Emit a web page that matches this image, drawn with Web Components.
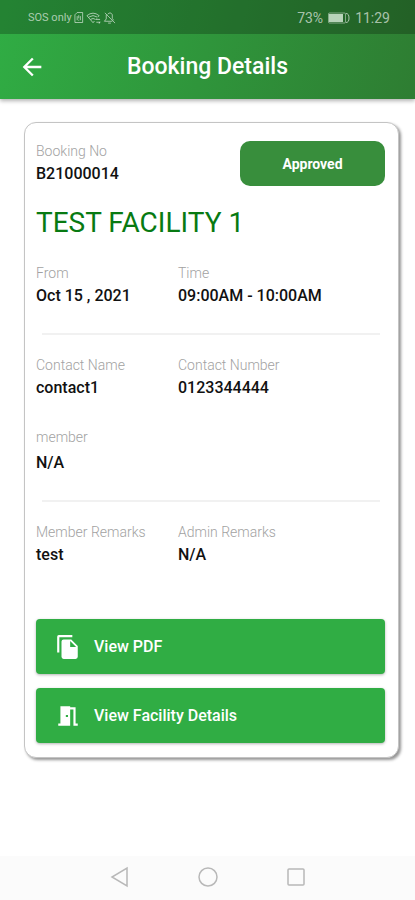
<!DOCTYPE html>
<html lang="en">
<head>
<meta charset="utf-8">
<meta name="viewport" content="width=device-width, initial-scale=1">
<title>Booking Details</title>
<style>
html, body { margin: 0; }
body { font-family: Roboto, "Liberation Sans", sans-serif; background: #fff; color: #111; }
</style>
</head>
<body>
<booking-screen></booking-screen>
<script>
const define = (name, html) => {
  const template = document.createElement('template');
  template.innerHTML = html;
  customElements.define(name, class extends HTMLElement {
    constructor() {
      super();
      this.attachShadow({ mode: 'open' }).append(template.content.cloneNode(true));
    }
  });
};

define('status-bar', `
<style>
:host { display: flex; justify-content: space-between; align-items: center; box-sizing: border-box; height: 34px; padding: 1px 25px 0 28px; background: rgba(0,0,0,.24); color: rgba(255,255,255,.62); }
div { display: flex; align-items: center; }
.left { font-size: 11px; gap: 2px; }
.right { font-size: 14px; gap: 5px; }
svg { display: block; fill: none; stroke: currentColor; }
</style>
<div class="left"><span>SOS only</span>
<svg width="10" height="13" viewBox="0 0 11 13"><path d="M3.5 1H9.5V12H1V3.5ZM3.5 5V9.500M7 5V9.500M5.200 4V7.500M5.200 9V10"/></svg>
<svg width="15" height="14" viewBox="0 0 16 14"><path d="M1 4.500Q7.500-.8 14 4.500L12.500 6M1 4.500L7.500 12L9 10.200M3 6Q7.500 2.800 12 6M5 8.400Q7.500 6.600 10 8.400M11 8.500H15M11 11.500H15M11.500 7.500L10.500 9M14 13L15 11"/></svg>
<svg width="13" height="14" viewBox="0 0 14 14"><path d="M2 1.500L13 12.500M3.500 3.500V8L1.500 10.500H10M5 3Q8-.2 10 3.500V7.500L11.500 9.500M5.500 12.500H8.500"/></svg>
</div>
<div class="right"><span>73%</span>
<svg width="22" height="12" viewBox="0 0 22 12"><rect x=".5" y="1" width="17" height="10" rx="1" stroke-opacity=".7"/><rect x="1" y="2" width="14" height="8" fill="#b7d3b9" stroke="none"/><path d="M18 1.500Q21 1.500 21 6T18 10.500"/></svg>
<span>11:29</span></div>`);

define('app-header', `
<style>
:host { display: block; color: #fff; background: linear-gradient(105deg, #30ad44, #2e7d32); box-shadow: 0 2px 4px rgba(0,0,0,.3); }
header { display: grid; grid-template-columns: 64px 1fr 64px; align-items: center; height: 65px; }
button { justify-self: center; display: block; padding: 0; margin: 0; border: 0; background: none; color: inherit; }
svg { display: block; fill: currentColor; }
h1 { margin: 0; padding-top: 1px; font-size: 23px; line-height: 28px; font-weight: 500; text-align: center; }
</style>
<status-bar></status-bar>
<header>
<button type="button" aria-label="Back"><svg width="28" height="28" viewBox="0 0 24 24"><path d="M20 11H7.830l5.590-5.590L12 4l-8 8 8 8 1.410-1.410L7.830 13H20z"/></svg></button>
<h1><slot></slot></h1>
</header>`);

define('status-badge', `
<style>
:host { display: flex; align-items: center; justify-content: center; box-sizing: border-box; width: 145px; height: 45px; border-radius: 10px; background: #388e3c; color: #fff; font-size: 14px; font-weight: 700; }
</style><slot></slot>`);

define('detail-field', `
<style>
:host { display: flex; flex-direction: column; gap: 1px; }
:host([spaced]) { gap: 4px; }
.label { font-size: 14px; line-height: 20px; font-weight: 300; color: #a2a2a2; }
.value { font-size: 16px; line-height: 24px; color: #111; font-weight: 500; }
</style>
<span class="label"><slot name="label"></slot></span>
<span class="value"><slot></slot></span>`);

define('field-row', `
<style>
:host { display: grid; grid-template-columns: 142px 1fr; }
</style><slot></slot>`);

define('section-rule', `
<style>
:host { display: block; height: 2px; margin: 25px 5px 20px 6px; background: #f1f1f1; }
</style>`);

define('action-button', `
<style>
:host { display: block; }
button { display: flex; align-items: center; gap: 13px; width: 100%; height: 55px; margin: 0; padding: 0 19px; border: 0; border-radius: 4px; background: #30ad44; color: #fff; font: 500 16px/24px Roboto, "Liberation Sans", sans-serif; text-align: left; box-shadow: 0 1px 3px rgba(0,0,0,.3); }
</style>
<button type="button"><slot name="icon"></slot><span><slot></slot></span></button>`);

define('booking-card', `
<style>
:host { display: block; margin: 23px 16px 0 24px; padding: 18px 13px 14px 11px; border: 1px solid #c4c4c4; border-radius: 12px; background: #fff; box-shadow: 2px 2px 3px rgba(0,0,0,.42); }
.top { display: flex; justify-content: space-between; align-items: flex-end; }
h2 { margin: 19px 0 22px; font-size: 28px; line-height: 36px; font-weight: 400; color: #087a12; }
.member { margin-top: 27px; }
.actions { display: grid; gap: 14px; margin-top: 52px; }
svg { display: block; width: 26px; height: 26px; fill: currentColor; }
</style>
<div class="top">
<detail-field><span slot="label">Booking No</span>B21000014</detail-field>
<status-badge>Approved</status-badge>
</div>
<h2>TEST FACILITY 1</h2>
<field-row>
<detail-field><span slot="label">From</span>Oct 15 , 2021</detail-field>
<detail-field><span slot="label">Time</span>09:00AM - 10:00AM</detail-field>
</field-row>
<section-rule></section-rule>
<field-row>
<detail-field><span slot="label">Contact Name</span>contact1</detail-field>
<detail-field><span slot="label">Contact Number</span>0123344444</detail-field>
</field-row>
<detail-field class="member" spaced><span slot="label">member</span>N/A</detail-field>
<section-rule></section-rule>
<field-row>
<detail-field><span slot="label">Member Remarks</span>test</detail-field>
<detail-field><span slot="label">Admin Remarks</span>N/A</detail-field>
</field-row>
<div class="actions">
<action-button><svg slot="icon" viewBox="0 0 24 24" aria-hidden="true"><path d="M16 1H3.500Q2 1 2 2.500V17H4V3H16ZM15 5H8Q6 5 6 7V21Q6 23 8 23H19Q21 23 21 21V11ZM14 12V6.500L19.500 12Z"/></svg>View PDF</action-button>
<action-button><svg slot="icon" viewBox="0 0 24 24" aria-hidden="true"><path d="M14 6V21H3V19H5V3H14V4H19V19H21V21H17V6ZM10 11V13H12V11Z"/></svg>View Facility Details</action-button>
</div>`);

define('system-nav', `
<style>
:host { display: block; background: #fbfbfb; }
nav { display: flex; justify-content: center; align-items: center; gap: 64px; height: 44px; box-sizing: border-box; padding-bottom: 2px; }
button { display: block; padding: 0; border: 0; background: none; color: #b8b8b8; }
svg { display: block; fill: none; stroke: currentColor; stroke-width: 1.500; }
</style>
<nav aria-label="System">
<button type="button" aria-label="Back"><svg width="24" height="24" viewBox="0 0 24 24"><path d="M19 3V21L4 12Z"/></svg></button>
<button type="button" aria-label="Home"><svg width="24" height="24" viewBox="0 0 24 24"><circle cx="12" cy="12" r="9"/></svg></button>
<button type="button" aria-label="Recent apps"><svg width="24" height="24" viewBox="0 0 24 24"><rect x="4" y="4" width="16" height="16" rx="1"/></svg></button>
</nav>`);

define('booking-screen', `
<style>
:host { display: flex; flex-direction: column; min-height: 100vh; }
main { flex: 1; }
</style>
<app-header>Booking Details</app-header>
<main><booking-card></booking-card></main>
<system-nav></system-nav>`);
</script>
</body>
</html>
